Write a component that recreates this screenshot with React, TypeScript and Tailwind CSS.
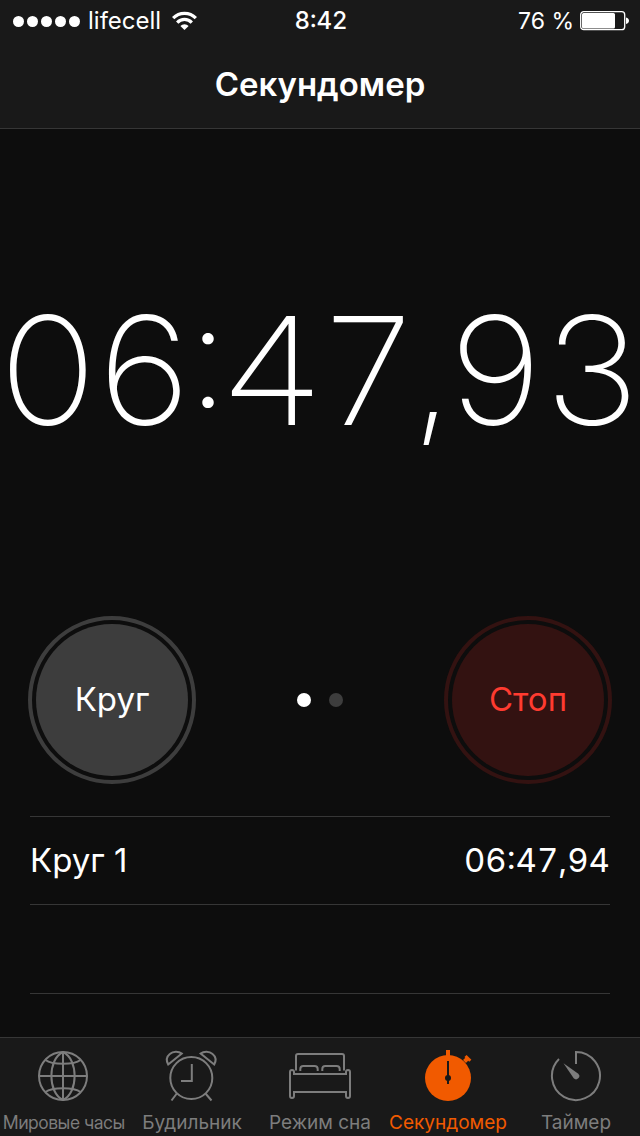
import type { ReactNode } from "react";

function SignalDots() {
  return (
    <span className="flex gap-[3px]" role="img" aria-label="5 / 5">
      {[1, 2, 3, 4, 5].map((n) => (
        <span key={n} className="size-[11px] rounded-full bg-white" />
      ))}
    </span>
  );
}

function WifiIcon() {
  return (
    <svg width="25" height="20" viewBox="0 0 26 20" fill="none" aria-hidden="true">
      <path d="M1.2 7 A16.6 16.6 0 0 1 24.8 7" stroke="#fff" strokeWidth="3.4" />
      <path d="M5.4 11.6 A10.6 10.6 0 0 1 20.6 11.6" stroke="#fff" strokeWidth="3.4" />
      <path d="M13 19.3 L8.7 15.2 A6.2 6.2 0 0 1 17.3 15.2 Z" fill="#fff" />
    </svg>
  );
}

function BatteryIcon() {
  return (
    <svg width="49" height="20" viewBox="0 0 49 20" fill="none" aria-hidden="true">
      <rect x="0.7" y="0.7" width="44" height="18" rx="3" stroke="#fff" strokeWidth="1.3" />
      <rect x="2" y="2" width="33" height="15.4" rx="1.5" fill="#fff" />
      <path d="M46 6.5 C48 7 49 8.300 49 9.700 C49 11.100 48 12.500 46 13 Z" fill="#fff" />
    </svg>
  );
}

function TabSvg({ children }: { children: ReactNode }) {
  return (
    <svg
      width="64"
      height="52"
      viewBox="0 0 64 52"
      fill="none"
      stroke="currentColor"
      strokeWidth="2"
      aria-hidden="true"
    >
      {children}
    </svg>
  );
}

function GlobeIcon() {
  return (
    <TabSvg>
      <circle cx="31" cy="26" r="24" />
      <path d="M31 2 V50 M7 26 H55" />
      <path d="M31 2 C15.500 9 15.500 43 31 50 C46.500 43 46.500 9 31 2 Z" />
      <path d="M13.500 10 C20 15 42 15 48.500 10 M13.500 42 C20 37 42 37 48.500 42" />
    </TabSvg>
  );
}

function AlarmIcon() {
  return (
    <TabSvg>
      <circle cx="31.300" cy="28" r="21" />
      <path d="M31.800 14 V31 H21" />
      <path d="M16.800 43.500 L11.500 50.500 M45.500 43.500 L51.500 50.500" />
      <path d="M8.200 14.500 C6 10.500 6.800 6.500 9.800 4 C13.200 1 18.500 1 21.800 3.600 Z" />
      <path d="M54.200 14.500 C56.400 10.500 55.600 6.500 52.600 4 C49.200 1 43.900 1 40.600 3.600 Z" />
    </TabSvg>
  );
}

function BedIcon() {
  return (
    <TabSvg>
      <path d="M8 20.500 V6 Q8 4 10 4 H54 Q56 4 56 6 V20.500" />
      <path d="M12.300 21 V19 Q12.300 16 15.300 16 H26.500 Q29.700 16 29.700 19 V21" />
      <path d="M34.300 21 V19 Q34.300 16 37.300 16 H48.500 Q51.700 16 51.700 19 V21" />
      <path d="M6 24 V22 Q6 20 4 20 Q2 20 2 22 V46 Q2 48 4 48 Q6 48 6 46 V42 H58 V46 Q58 48 60 48 Q62 48 62 46 V22 Q62 20 60 20 Q58 20 58 22 V24 Z" />
    </TabSvg>
  );
}

function StopwatchIcon() {
  return (
    <TabSvg>
      <circle cx="32" cy="28" r="23" fill="currentColor" stroke="none" />
      <path d="M32 0 V8" strokeWidth="4" />
      <path d="M48.500 11.500 L52 8" strokeWidth="4" />
      <path d="M49.500 6 L54.300 10.800" strokeWidth="3" />
      <path d="M32 11 V34" stroke="#191919" />
      <circle cx="32" cy="28" r="3" fill="#191919" stroke="none" />
    </TabSvg>
  );
}

function TimerIcon() {
  return (
    <TabSvg>
      <path d="M32 14 V2 A24 24 0 1 1 15 9" />
      <path d="M19.500 13.200 L34.300 23.700 A3.200 3.200 0 0 1 29.700 28.300 Z" fill="currentColor" stroke="none" />
    </TabSvg>
  );
}

const tabs = [
  {
    label: "Мировые часы",
    icon: <GlobeIcon />,
    active: false,
    text: "font-['Inter_Display','Inter',sans-serif] text-[18px]",
  },
  { label: "Будильник", icon: <AlarmIcon />, active: false, text: "text-[19px]" },
  { label: "Режим сна", icon: <BedIcon />, active: false, text: "text-[19px]" },
  { label: "Секундомер", icon: <StopwatchIcon />, active: true, text: "text-[19px]" },
  { label: "Таймер", icon: <TimerIcon />, active: false, text: "text-[19px]" },
];

export default function App() {
  return (
    <div className="flex min-h-screen flex-col bg-[#0d0d0d] font-['Inter','Noto_Sans',sans-serif] text-white">
      <header className="border-b border-[#363636] bg-[#191919]">
        <div className="grid h-[42px] grid-cols-[1fr_auto_1fr] items-center pr-[11px] pl-[13px] text-2xl">
          <div className="flex items-center gap-2">
            <SignalDots />
            <span>lifecell</span>
            <span className="pl-[3px]">
              <WifiIcon />
            </span>
          </div>
          <time className="font-medium tabular-nums">8:42</time>
          <div className="flex items-center justify-end gap-[6px]">
            <span className="text-[23px]">76 %</span>
            <BatteryIcon />
          </div>
        </div>
        <h1 className="flex h-[86px] items-center justify-center text-[33px] font-semibold">
          Секундомер
        </h1>
      </header>

      <main className="flex grow flex-col">
        <div className="flex h-[487px] items-center justify-center pb-1 font-['Inter_Display','Inter',sans-serif] text-[150px] leading-none font-extralight whitespace-nowrap">
          <time>
            <span className="tabular-nums">06</span>
            <span className="[font-feature-settings:'case']">:</span>
            <span className="tabular-nums">47</span>,<span className="tabular-nums">93</span>
          </time>
        </div>

        <div className="flex items-center justify-between px-7">
          <button
            type="button"
            className="size-[168px] rounded-full border-4 border-[#3d3d3d] p-1 text-[33px]"
          >
            <span className="flex size-full items-center justify-center rounded-full bg-[#3d3d3d]">
              Круг
            </span>
          </button>
          <div className="flex gap-[18px]">
            <span className="size-[14px] rounded-full bg-white" />
            <span className="size-[14px] rounded-full bg-[#3d3d3d]" />
          </div>
          <button
            type="button"
            className="size-[168px] rounded-full border-4 border-[#331211] p-1 text-[33px] text-[#ff3b30]"
          >
            <span className="flex size-full items-center justify-center rounded-full bg-[#331211]">
              Стоп
            </span>
          </button>
        </div>

        <ol className="mx-[30px] mt-8 border-t border-[#363636] text-[33px]">
          <li className="flex h-[88px] items-center justify-between border-b border-[#363636]">
            <span>Круг 1</span>
            <time className="tabular-nums">06:47,94</time>
          </li>
          <li className="h-[89px] border-b border-[#363636]" aria-hidden="true" />
        </ol>
      </main>

      <nav className="grid grid-cols-5 border-t border-[#363636] bg-[#191919] pt-3">
        {tabs.map((tab) => (
          <a
            key={tab.label}
            href="#"
            aria-current={tab.active ? "page" : undefined}
            className={
              tab.active
                ? "flex min-w-0 flex-col items-center text-[#f15a00]"
                : "flex min-w-0 flex-col items-center text-[#7d7d7d]"
            }
          >
            {tab.icon}
            <span className={`mt-2 leading-[26px] whitespace-nowrap ${tab.text}`}>{tab.label}</span>
          </a>
        ))}
      </nav>
    </div>
  );
}
